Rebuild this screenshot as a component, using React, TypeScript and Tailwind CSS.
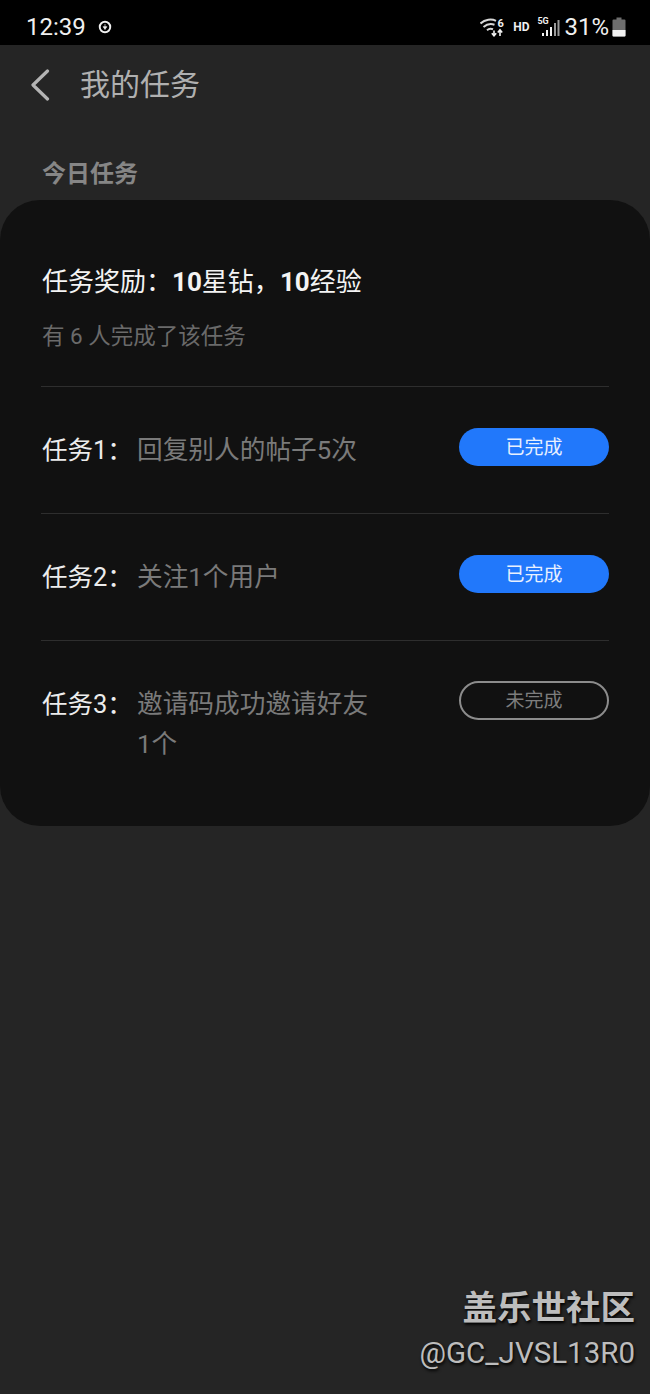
const tasks = [
  { label: '任务1：', desc: '回复别人的帖子5次', done: true },
  { label: '任务2：', desc: '关注1个用户', done: true },
  { label: '任务3：', desc: '邀请码成功邀请好友1个', done: false },
];

const StatusBar = () => (
  <div className="flex h-[45px] shrink-0 items-center bg-black pl-[26px] pr-[24px] pt-[9px] text-[#f0f0f0]">
    <span className="text-[24px] leading-none">12:39</span>
    <svg width="14" height="14" viewBox="0 0 16 16" className="ml-[12px]" fill="none">
      <circle cx="8" cy="8" r="6" stroke="#f0f0f0" strokeWidth="2.200" />
      <path d="M8 4.500v3.300M5.900 7.600 8 10.800l2.100-3.200z" fill="#f0f0f0" stroke="#f0f0f0" strokeWidth="0.800" />
    </svg>
    <div className="ml-auto flex items-center">
      {/* wifi 6 with up/down arrows */}
      <svg width="26" height="20" viewBox="0 0 26 20" fill="none">
        <path d="M0.500 6.500C5 2.200 11.500 1.500 16 3.800" stroke="#d8d8d8" strokeWidth="2" />
        <path d="M3.500 10C7 7 11 6.500 14.500 7.800" stroke="#d8d8d8" strokeWidth="2" />
        <path d="M7 13.200c1.800-1.500 4-1.700 6-.9" stroke="#d8d8d8" strokeWidth="2" />
        <path d="M14 13.500v5M11.800 16.200l2.200 2.600 2.200-2.600" stroke="#f0f0f0" strokeWidth="1.600" />
        <path d="M20 19v-6M17.800 15.400l2.200-2.600 2.200 2.600" stroke="#f0f0f0" strokeWidth="1.600" />
        <text x="17.500" y="10" fontSize="11" fontWeight="700" fill="#f0f0f0">6</text>
      </svg>
      <span className="ml-[7px] text-[12px] font-bold leading-none">HD</span>
      <div className="relative ml-[8px] h-[20px] w-[23px]">
        <span className="absolute left-0 top-0 text-[9px] font-bold leading-none">5G</span>
        <svg width="23" height="20" viewBox="0 0 23 20" className="absolute left-0 top-0">
          <rect x="5" y="16" width="2" height="3" fill="#f0f0f0" />
          <rect x="9" y="13" width="2" height="6" fill="#f0f0f0" />
          <rect x="13" y="10" width="2" height="9" fill="#f0f0f0" />
          <rect x="17" y="6" width="2" height="13" fill="#9a9a9a" />
          <rect x="20.500" y="3" width="2" height="16" fill="#9a9a9a" />
        </svg>
      </div>
      <span className="ml-[4px] text-[24px] leading-none">31%</span>
      <svg width="14" height="20" viewBox="0 0 14 20" className="ml-[3px]">
        <path d="M4.500 0.500h5v2H12.500a1 1 0 0 1 1 1v15a1 1 0 0 1-1 1H1.500a1 1 0 0 1-1-1V3.500a1 1 0 0 1 1-1h3z" fill="#6e6e6e" />
        <path d="M0.500 13h13v5.500a1 1 0 0 1-1 1H1.500a1 1 0 0 1-1-1z" fill="#f2f2f2" />
      </svg>
    </div>
  </div>
);

const TaskRow = ({ label, desc, done }: { label: string; desc: string; done: boolean }) => (
  <div className="flex h-[127px] items-start border-t border-[#2e2e2e] pt-[41px]">
    <div className="flex w-[96px] shrink-0 pl-[1px] pt-[2px] text-[25.500px] leading-[40px] text-[#ececec]">{label}</div>
    <div className="w-[240px] pt-[2px] text-[25.700px] leading-[40px] text-[#7a7a7a]">{desc}</div>
    {done ? (
      <div className="ml-auto flex h-[38px] w-[150px] items-center justify-center rounded-full bg-[#2178fb] pt-[2px] text-[19px] text-[#e8f0ff]">
        已完成
      </div>
    ) : (
      <div className="-mt-[1px] ml-auto flex h-[39px] w-[150px] items-center justify-center rounded-full border-2 border-[#8c8c8c] pt-[1px] text-[19px] text-[#7d7d7d]">
        未完成
      </div>
    )}
  </div>
);

export default function App() {
  return (
    <div className="relative flex h-[1394px] w-[650px] flex-col overflow-hidden bg-[#252525] font-['Roboto','Noto_Sans_CJK_SC',sans-serif]">
      <StatusBar />

      {/* Title bar */}
      <div className="flex h-[78px] shrink-0 items-center pl-[30px]">
        <svg width="20" height="32" viewBox="0 0 20 32" fill="none" className="mt-[1px]">
          <path d="M17.500 2 3 16l14.500 14" stroke="#b4b4b4" strokeWidth="3.200" strokeLinecap="round" strokeLinejoin="round" />
        </svg>
        <h1 className="ml-[30px] pt-[1px] text-[30px] font-normal leading-none text-[#b0b0b0]">我的任务</h1>
      </div>

      <div className="flex h-[77px] shrink-0 items-start pl-[42px] pt-[37px]">
        <h2 className="text-[24px] font-bold leading-[28px] text-[#868686]">今日任务</h2>
      </div>

      {/* Card */}
      <div className="h-[626px] shrink-0 rounded-[40px] bg-[#111111] px-[41px] pt-[64px]">
        <div className="flex pl-[1px] text-[26px] font-normal leading-[36px] text-[#f4f4f4]">
          任务奖励：<b className="font-bold">10</b>星钻，<b className="font-bold">10</b>经验
        </div>
        <p className="mt-[21px] h-[65px] pl-[1px] text-[22.500px] leading-[30px] text-[#6a6a6a]">有 6 人完成了该任务</p>
        {tasks.map((task) => (
          <TaskRow key={task.label} {...task} />
        ))}
      </div>

      {/* Watermark */}
      <div className="absolute bottom-[18px] right-[15px] flex flex-col items-end text-[#bdbdbd] [text-shadow:1px_2px_3px_#000]">
        <span className="text-[34.500px] font-bold leading-[44px]">盖乐世社区</span>
        <span className="text-[29.500px] leading-[46px]">@GC_JVSL13R0</span>
      </div>
    </div>
  );
}
